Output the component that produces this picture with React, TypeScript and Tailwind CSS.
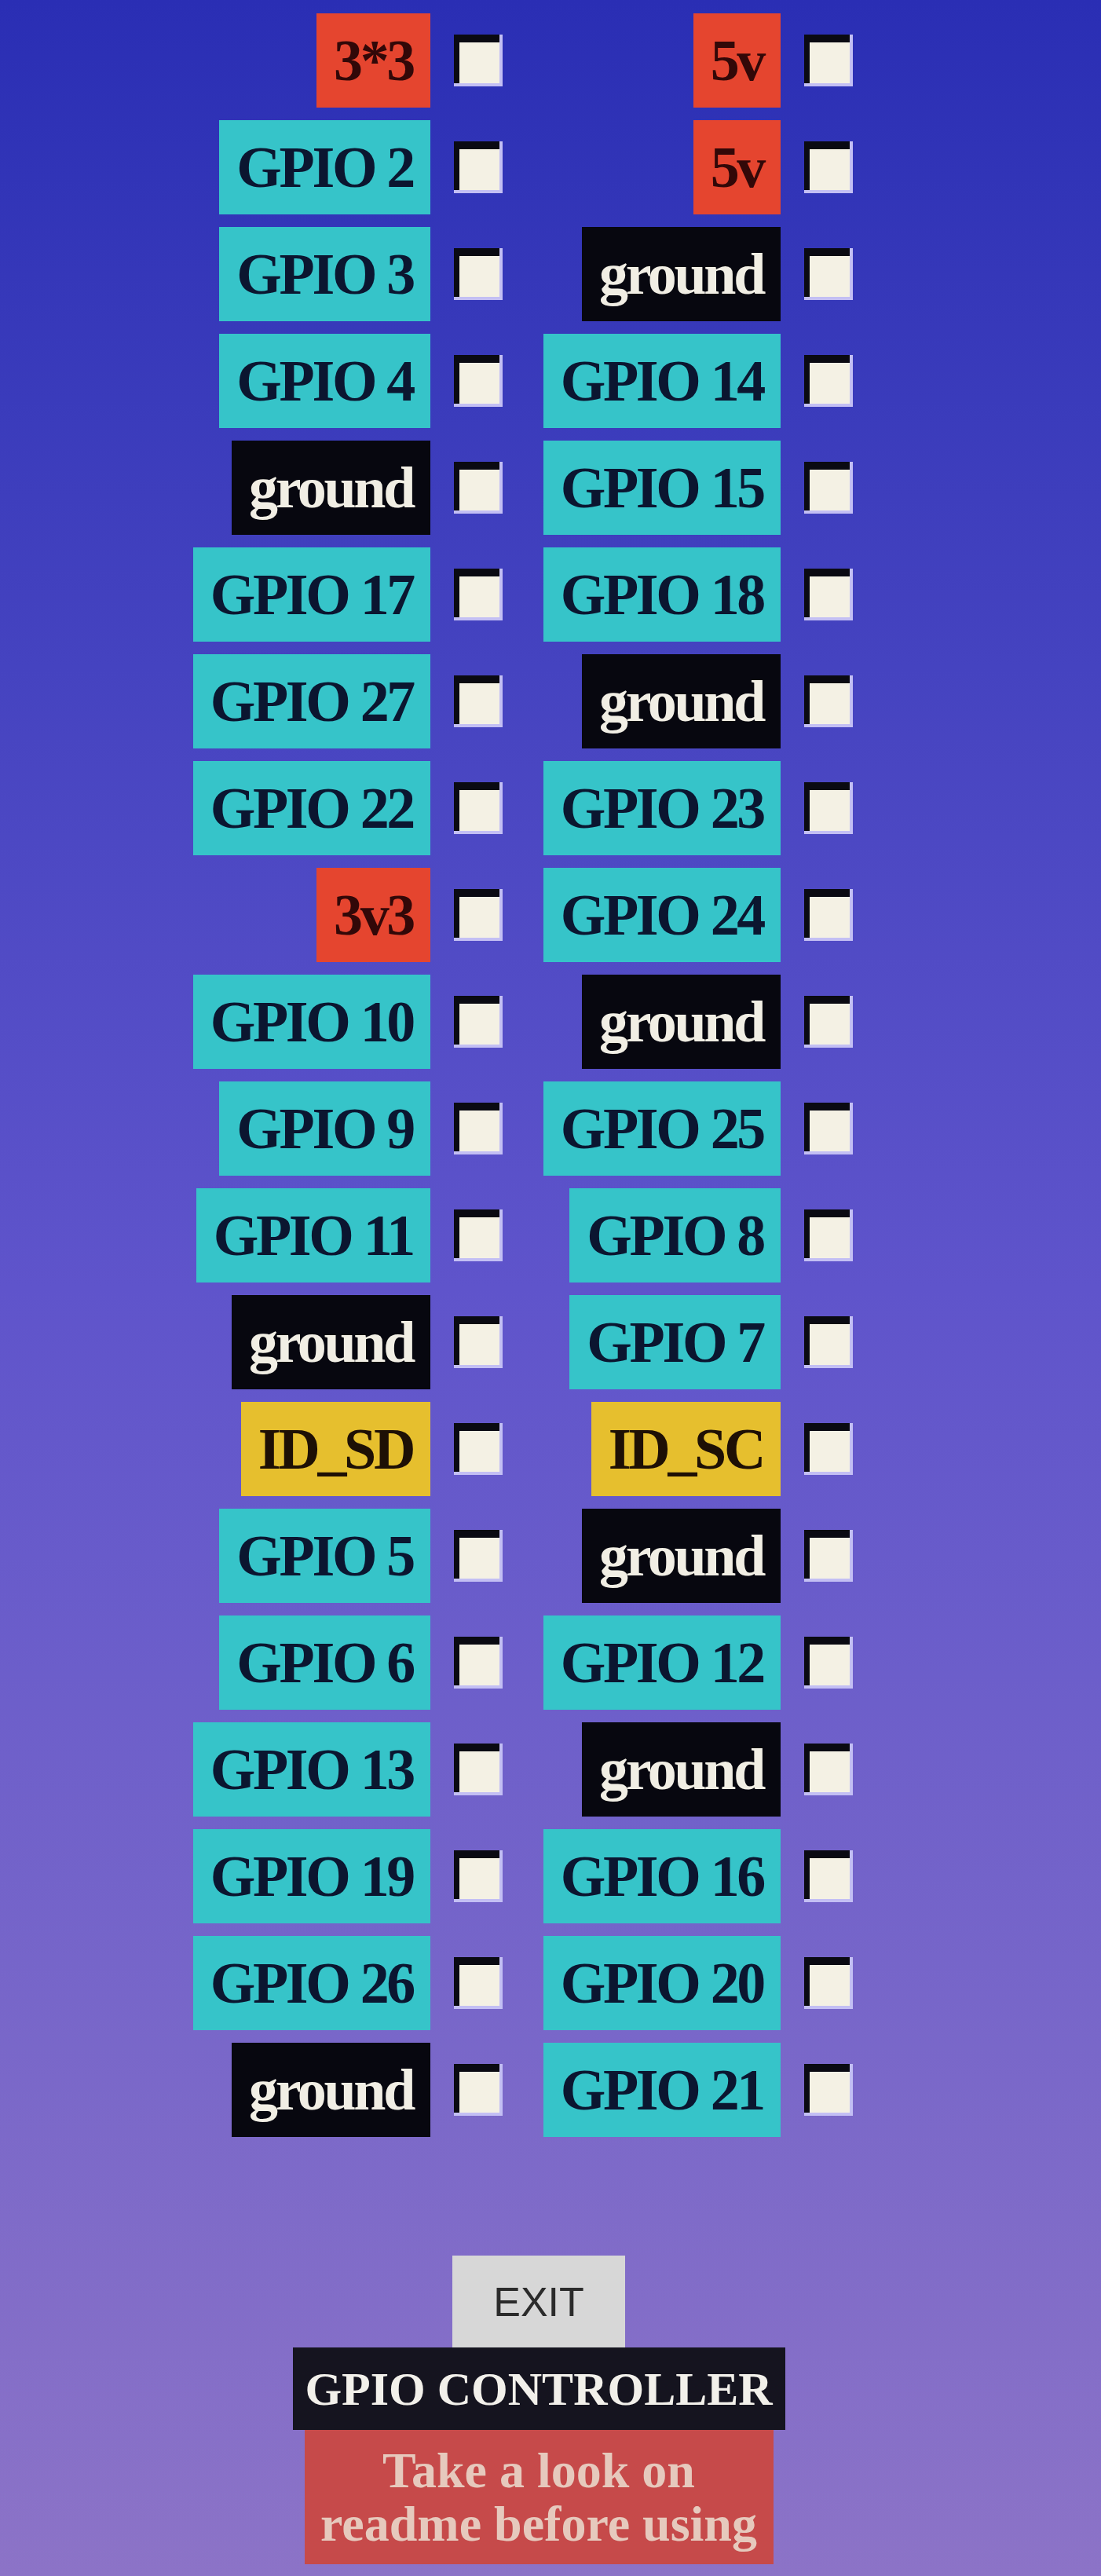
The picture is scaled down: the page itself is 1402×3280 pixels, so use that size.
import { useState } from "react";

type Kind = "gpio" | "power" | "ground" | "id";

const kindOf = (label: string): Kind => {
  if (label.startsWith("GPIO")) return "gpio";
  if (label === "ground") return "ground";
  if (label.startsWith("ID_")) return "id";
  return "power";
};

const labelStyles: Record<Kind, string> = {
  gpio: "bg-[#36c4c9] text-[#0b1630]",
  power: "bg-[#e5452f] text-[#320808]",
  ground: "bg-[#07070f] text-[#f1eee4]",
  id: "bg-[#e6bf2e] text-[#1e1005]",
};

// header pairs, physical pin order (odd pin left, even pin right)
const rows: [string, string][] = [
  ["3*3", "5v"],
  ["GPIO 2", "5v"],
  ["GPIO 3", "ground"],
  ["GPIO 4", "GPIO 14"],
  ["ground", "GPIO 15"],
  ["GPIO 17", "GPIO 18"],
  ["GPIO 27", "ground"],
  ["GPIO 22", "GPIO 23"],
  ["3v3", "GPIO 24"],
  ["GPIO 10", "ground"],
  ["GPIO 9", "GPIO 25"],
  ["GPIO 11", "GPIO 8"],
  ["ground", "GPIO 7"],
  ["ID_SD", "ID_SC"],
  ["GPIO 5", "ground"],
  ["GPIO 6", "GPIO 12"],
  ["GPIO 13", "ground"],
  ["GPIO 19", "GPIO 16"],
  ["GPIO 26", "GPIO 20"],
  ["ground", "GPIO 21"],
];

const Check = ({ on, onToggle }: { on: boolean; onToggle: () => void }) => (
  <button
    onClick={onToggle}
    className="shrink-0 border-r-[4px] border-b-[4px] border-[#c3bff4] p-0"
  >
    <span className="flex w-[58px] h-[62px] items-center justify-center border-t-[10px] border-l-[7px] border-[#0a0a12] bg-[#f4f1e4] text-[40px] leading-none text-black">
      {on ? "✓" : ""}
    </span>
  </button>
);

const Pin = ({ label, on, onToggle }: { label: string; on: boolean; onToggle: () => void }) => (
  <div className="flex items-center justify-end gap-[30px]">
    <span
      className={`flex h-[120px] items-center px-[22px] text-[74px] font-bold tracking-[-0.045em] whitespace-nowrap ${labelStyles[kindOf(label)]}`}
    >
      {label}
    </span>
    <Check on={on} onToggle={onToggle} />
  </div>
);

export default function App() {
  const [state, setState] = useState<Record<string, boolean>>({});
  const toggle = (key: string) => setState((s) => ({ ...s, [key]: !s[key] }));

  return (
    <main
      className="min-h-[3280px] bg-gradient-to-b from-[#2a2eb4] via-[#5f54cb] to-[#8c73c7] pt-[17px]"
      style={{ fontFamily: '"Liberation Serif", "Times New Roman", serif' }}
    >
      {/* PIN GRID */}
      <div className="ml-[220px] grid grid-cols-[420px_420px] gap-x-[26px] gap-y-[16px]">
        {rows.map(([l, r], i) => (
          <div key={i} className="contents">
            <Pin label={l} on={!!state[`${i}-l`]} onToggle={() => toggle(`${i}-l`)} />
            <Pin label={r} on={!!state[`${i}-r`]} onToggle={() => toggle(`${i}-r`)} />
          </div>
        ))}
      </div>

      {/* FOOTER */}
      <div className="mt-[151px] flex flex-col items-center pr-[30px]">
        <button
          className="w-[220px] h-[117px] bg-[#d7d7d7] text-[52px] text-[#2b2b2b]"
          style={{ fontFamily: '"Liberation Sans", Arial, sans-serif' }}
        >
          EXIT
        </button>
        <div className="h-[105px] w-[627px] flex items-center justify-center bg-[#15141f] text-[60px] font-bold text-[#f2f0ea] whitespace-nowrap">
          GPIO CONTROLLER
        </div>
        <div className="h-[171px] w-[597px] flex flex-col items-center justify-center bg-[#c64a4a] text-[64px] font-bold leading-[68px] text-[#e6c9bd]">
          <span>Take a look on</span>
          <span>readme before using</span>
        </div>
      </div>
    </main>
  );
}
